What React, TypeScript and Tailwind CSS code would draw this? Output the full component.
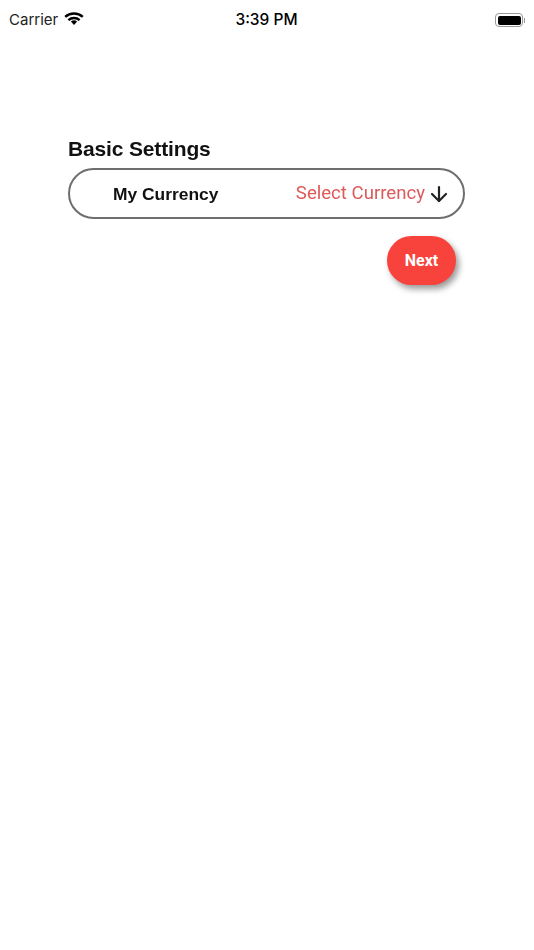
import { ArrowDown } from 'lucide-react'

function StatusBar() {
  return (
    <div className="grid h-[40px] grid-cols-3 items-center px-[9px] text-black font-['Inter',sans-serif]">
      <div className="flex items-center gap-[6px]">
        <span className="text-[15px] text-[#222]">Carrier</span>
        <svg width="20" height="15" viewBox="0 0 20 14" className="mb-[4px]">
          <path d="M10 13.5 6.9 10.1a4.6 4.6 0 0 1 6.2 0z" fill="#000" />
          <path d="M1.2 5.4a13 13 0 0 1 17.6 0" stroke="#000" strokeWidth="2.4" fill="none" />
          <path d="M4.4 8.6a8.4 8.4 0 0 1 11.2 0" stroke="#000" strokeWidth="2.4" fill="none" />
        </svg>
      </div>
      <div className="pr-[1px] text-center text-[15.5px] font-medium whitespace-nowrap">3:39 PM</div>
      <div className="flex items-center justify-end">
        <div className="flex h-[14px] w-[28px] rounded-[4px] border border-[#999] p-[1.5px]">
          <div className="flex-1 rounded-[2px] bg-black" />
        </div>
        <div className="ml-[1px] h-[5px] w-[1px] bg-[#999]" />
      </div>
    </div>
  )
}

export default function App() {
  return (
    <div className="min-h-[950px] w-[534px] bg-white">
      <StatusBar />
      <div className="pl-[68px] pr-[69px] pt-[97px]">
        <h1 className="text-[21px] leading-[24px] font-bold tracking-[-0.15px] text-[#111] font-['Liberation_Sans',sans-serif] blur-[0.35px]">
          Basic Settings
        </h1>
        <div className="mt-[7px] flex h-[51px] items-center rounded-full border-2 border-[#6e6e6e] pl-[43px] pr-[12px] pt-[1px] blur-[0.25px]">
          <span className="text-[17.4px] font-bold text-[#111] font-['Liberation_Sans',sans-serif]">My Currency</span>
          <span className="ml-auto text-[18.6px] text-[#de5a5a] font-['Roboto',sans-serif]">Select Currency</span>
          <ArrowDown className="ml-[2px] h-[24px] w-[24px] text-[#222]" strokeWidth={2.2} />
        </div>
        <div className="mt-[17px] flex justify-end pr-[9px]">
          <button className="h-[49px] w-[69px] rounded-full bg-[#f8423c] text-[16px] font-bold text-white font-['Roboto',sans-serif] shadow-[3px_4px_6px_rgba(0,0,0,0.4)]">
            Next
          </button>
        </div>
      </div>
    </div>
  )
}
